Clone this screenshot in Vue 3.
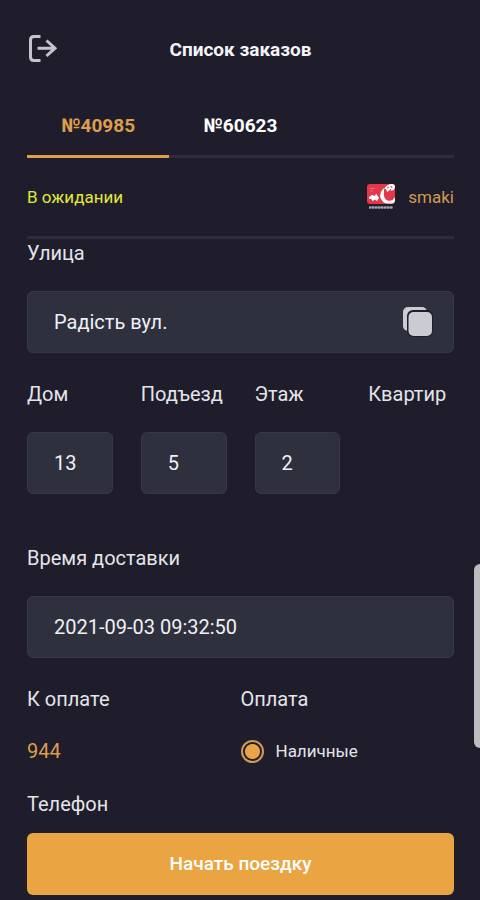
<script setup>
import { ref } from 'vue'

const orders = ['40985', '60623']
const active = ref('40985')
const street = ref('Радість вул.')
const place = ref([
  { id: 'house', label: 'Дом', value: '13' },
  { id: 'entrance', label: 'Подъезд', value: '5' },
  { id: 'floor', label: 'Этаж', value: '2' },
])
const time = ref('2021-09-03 09:32:50')
const payment = ref('cash')
</script>

<template>
  <main class="screen">
    <header class="header">
      <button class="icon-button" type="button" aria-label="Выйти">
        <svg width="30" height="30" viewBox="0 0 30 30" fill="none" stroke="currentColor" stroke-width="3">
          <path d="M13.5 2.6H7Q3.5 2.6 3.5 6V23Q3.5 26.6 7 26.6H13.5" />
          <path d="M10.5 14.2H28M19.5 6.5L28 14.2L19.5 22" />
        </svg>
      </button>
      <h1 class="title">Список заказов</h1>
    </header>

    <nav class="tabs">
      <button
        v-for="order in orders"
        :key="order"
        type="button"
        class="tab"
        :class="{ active: active === order }"
        @click="active = order"
      >№{{ order }}</button>
    </nav>

    <div class="status">
      <span class="state">В ожидании</span>
      <span class="shop">
        <svg width="29" height="28" viewBox="0 0 29 28">
          <rect x="0" y="1" width="28" height="20" rx="3" fill="#e2384a" />
          <path d="M3 5.5H8M3 8H6" stroke="#ee6a78" stroke-width="1" />
          <path d="M2 14L5 12L8 13L9 10.5L11 13.5L12 15L10 18L8 16.5L6 18L4 16L2 16Z" fill="#fff" />
          <path d="M17 5Q12 10 13.5 15Q16 21 22 20.5H25Q28 20 28 17V14Q25 19 20.5 17.5Q16 15.5 17 9Z" fill="#fff" />
          <path d="M17 6Q20 1 25 1Q28 1 28 4Q27 9 23 7L20 9L19 6Z" fill="#fff" />
          <path d="M20 5L22 4M24 3L25 5M23 7L24 6" stroke="#e2384a" stroke-width="1" />
          <path d="M2 24.5H26" stroke="#7d7b86" stroke-width="2" />
          <path d="M2 24.5H26" stroke="#a9a7b0" stroke-width="2" stroke-dasharray="2 1" />
        </svg>
        smaki
      </span>
    </div>

    <form class="form" @submit.prevent>
      <div class="field">
        <label class="label" for="street">Улица</label>
        <div class="box">
          <input id="street" v-model="street" class="input" type="text" />
          <button class="icon-button copy" type="button" aria-label="Скопировать">
            <svg width="30" height="30" viewBox="0 0 30 30">
              <rect x="0" y="0" width="24" height="24" rx="5" fill="#cbccd3" />
              <rect x="4" y="3" width="26" height="27" rx="6" fill="#1d1d2d" />
              <rect x="5.5" y="5" width="23.5" height="24" rx="5" fill="#cbccd3" />
            </svg>
          </button>
        </div>
      </div>

      <div class="place">
        <div v-for="item in place" :key="item.id" class="field">
          <label class="label" :for="item.id">{{ item.label }}</label>
          <div class="box">
            <input :id="item.id" v-model="item.value" class="input" type="text" />
          </div>
        </div>
        <div class="field">
          <span class="label">Квартир</span>
        </div>
      </div>

      <div class="field time">
        <label class="label" for="time">Время доставки</label>
        <div class="box">
          <input id="time" v-model="time" class="input" type="text" />
        </div>
      </div>

      <div class="payment">
        <div class="pair">
          <span class="label">К оплате</span>
          <span class="sum">944</span>
        </div>
        <div class="pair">
          <span class="label">Оплата</span>
          <label class="option">
            <input v-model="payment" class="radio" type="radio" name="payment" value="cash" />
            Наличные
          </label>
        </div>
      </div>

      <span class="label phone">Телефон</span>
      <button class="submit" type="submit">Начать поездку</button>
    </form>

    <div class="thumb"></div>
  </main>
</template>

<style>
body {
  margin: 0;
  background: #1f1d2b;
}
</style>

<style scoped>
.screen {
  position: relative;
  box-sizing: border-box;
  min-height: 100vh;
  padding: 32px 26px 5px 27px;
  overflow: hidden;
  background: #1f1d2b;
  color: #e4e4e9;
  font-family: Roboto, "Noto Sans", sans-serif;
  font-size: 20px;
  line-height: 24px;
}

button,
input {
  margin: 0;
  border: 0;
  padding: 0;
  background: none;
  color: inherit;
  font: inherit;
}

button {
  cursor: pointer;
}

.icon-button {
  display: flex;
  flex: none;
  color: #c5c3cf;
}

.header {
  display: grid;
  grid-template-columns: 30px 1fr 30px;
  align-items: center;
  height: 34px;
}

.title {
  margin: 0;
  padding-top: 2px;
  color: #f4f4f6;
  font-size: 19px;
  font-weight: 700;
  text-align: center;
}

.tabs {
  display: grid;
  grid-template-columns: repeat(3, 1fr);
  height: 64px;
  margin-top: 28px;
  box-shadow: inset 0 -3px #2d2c3a;
}

.tab {
  padding-top: 2px;
  border-bottom: 3px solid transparent;
  color: #fff;
  font-size: 19px;
  font-weight: 700;
}

.tab.active {
  border-color: #dd9e4d;
  color: #dd9e4d;
}

.status {
  display: flex;
  align-items: center;
  justify-content: space-between;
  height: 78px;
  border-bottom: 3px solid #2d2c3a;
  font-size: 17px;
}

.state {
  color: #e0e83c;
}

.shop {
  display: flex;
  align-items: center;
  gap: 12px;
  color: #cf9a54;
}

.form,
.field,
.pair {
  display: flex;
  flex-direction: column;
}

.field {
  gap: 26px;
  min-width: 0;
}

.label {
  white-space: nowrap;
}

.form {
  padding-top: 2px;
}

.box {
  display: flex;
  align-items: center;
  box-sizing: border-box;
  height: 62px;
  padding: 0 20px 0 26px;
  border: 1px solid #373846;
  border-radius: 6px;
  background: #2e303e;
}

.input {
  flex: 1;
  min-width: 0;
  width: 100%;
  outline: 0;
  color: #f0f0f4;
}

.place {
  display: grid;
  grid-template-columns: repeat(4, 1fr);
  gap: 28px;
  margin-top: 29px;
}

.time {
  margin-top: 52px;
}

.payment {
  display: grid;
  grid-template-columns: 1fr 1fr;
  margin-top: 29px;
}

.pair {
  gap: 28px;
}

.sum {
  color: #dd9e4d;
}

.option {
  display: flex;
  align-items: center;
  gap: 12px;
  font-size: 17px;
}

.radio {
  appearance: none;
  box-sizing: border-box;
  width: 23px;
  height: 23px;
  border: 2px solid #cf9a54;
  border-radius: 50%;
}

.radio:checked {
  background: radial-gradient(circle, #eba442 7px, transparent 8px);
}

.phone {
  margin-top: 29px;
}

.submit {
  height: 62px;
  margin-top: 17px;
  border-radius: 6px;
  background: #eba442;
  color: #fff;
  font-size: 19px;
  font-weight: 500;
}

.thumb {
  position: absolute;
  top: 564px;
  right: 0;
  width: 6px;
  height: 184px;
  border-radius: 6px 0 0 6px;
  background: #bdbcbe;
}
</style>
